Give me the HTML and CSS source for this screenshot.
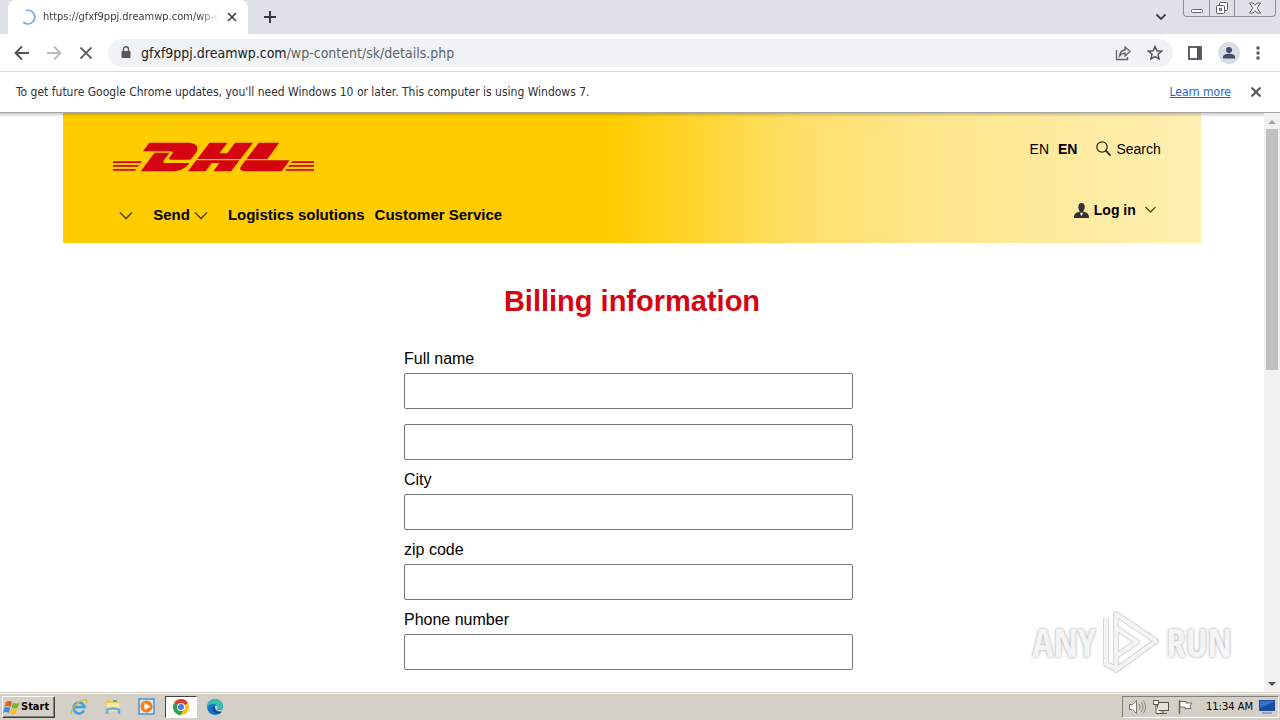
FILE: index.html
```html
<!DOCTYPE html>
<html lang="en">
<head>
<meta charset="utf-8">
<meta name="viewport" content="width=device-width, initial-scale=1">
<title>Sandbox desktop</title>
<link rel="stylesheet" href="styles.css">
</head>
<body>
<div class="desktop">
  <header class="tabstrip">
    <div class="tab">
      <svg class="spinner" width="16" height="16" viewBox="0 0 16 16"><path d="M6 1.600A6.800 6.800 0 1 1 3.200 13" fill="none" stroke="#7ba7e4" stroke-width="1.8"/></svg>
      <span class="tab-title">https://gfxf9ppj.dreamwp.com/wp-c</span>
      <button class="icon-btn" aria-label="Close tab"><svg width="10" height="10" viewBox="0 0 10 10"><path d="M1 1l8 8M9 1l-8 8" stroke="#3c4043" stroke-width="1.7"/></svg></button>
    </div>
    <button class="icon-btn new-tab" aria-label="New tab"><svg width="12" height="12" viewBox="0 0 12 12"><path d="M6 0v12M0 6h12" stroke="#35383d" stroke-width="2"/></svg></button>
    <button class="icon-btn tab-search" aria-label="Search tabs"><svg width="12" height="8" viewBox="0 0 12 8"><path d="M1.500 1.500L6 6l4.500-4.500" fill="none" stroke="#3c4043" stroke-width="1.8"/></svg></button>
    <div class="window-buttons">
      <button class="win-btn" aria-label="Minimize"><svg width="14" height="12" viewBox="0 0 14 12"><rect x="1.500" y="7.500" width="11" height="3" rx="1" fill="#fff" stroke="#5b606b"/></svg></button>
      <button class="win-btn" aria-label="Restore"><svg width="14" height="12" viewBox="0 0 14 12"><rect x="4.500" y=".5" width="8" height="8" rx="1" fill="#fff" stroke="#5b606b"/><rect x="1.500" y="3.500" width="8" height="8" rx="1" fill="#fff" stroke="#5b606b"/><rect x="4.500" y="6.500" width="2" height="2" fill="none" stroke="#5b606b"/></svg></button>
      <button class="win-btn win-close" aria-label="Close"><svg width="14" height="12" viewBox="0 0 14 12"><path d="M1.500 1h3.500l2 2.500 2-2.500h3.500L9 6l3.500 5H9L7 8.500 5 11H1.500L5 6z" fill="#fff" stroke="#5b606b"/></svg></button>
    </div>
  </header>

  <nav class="toolbar" aria-label="Browser toolbar">
    <button class="icon-btn nav-btn" aria-label="Back"><svg width="16" height="16" viewBox="0 0 16 16"><path d="M15 8H2M8 1.500L1.500 8 8 14.500" fill="none" stroke="#505459" stroke-width="1.9"/></svg></button>
    <button class="icon-btn nav-btn" aria-label="Forward"><svg width="16" height="16" viewBox="0 0 16 16"><path d="M1 8h13M8 1.500L14.500 8 8 14.500" fill="none" stroke="#b8babd" stroke-width="1.8"/></svg></button>
    <button class="icon-btn nav-btn" aria-label="Stop"><svg width="14" height="14" viewBox="0 0 14 14"><path d="M1.500 1.500l11 11M12.500 1.500l-11 11" stroke="#5f6368" stroke-width="1.8"/></svg></button>
    <div class="omnibox">
      <svg width="10" height="13" viewBox="0 0 10 13"><path d="M2.500 6V3.300a2.500 2.500 0 0 1 5 0V6" fill="none" stroke="#55585d" stroke-width="1.4"/><rect x=".5" y="5" width="9" height="7" rx="1" fill="#55585d"/></svg>
      <span class="url"><b>gfxf9ppj.dreamwp.com</b>/wp-content/sk/details.php</span>
      <button class="icon-btn" aria-label="Share"><svg width="16" height="16" viewBox="0 0 16 16"><path d="M1.500 5v9.500h11V12" fill="none" stroke="#5f6368" stroke-width="1.3"/><path d="M4.500 11C5 7 7 5.200 10 5V2l5 4.600L10 11V8.200C7.500 8.200 6 9 4.500 11z" fill="none" stroke="#5f6368" stroke-width="1.3"/></svg></button>
      <button class="icon-btn" aria-label="Bookmark"><svg width="16" height="16" viewBox="0 0 16 16"><path d="M8 1.500l1.900 4.300 4.700.4-3.600 3.100 1.100 4.600L8 11.500l-4.100 2.400L5 9.300 1.400 6.200l4.700-.4z" fill="none" stroke="#505459" stroke-width="1.500"/></svg></button>
    </div>
    <button class="icon-btn" aria-label="Side panel"><svg width="14" height="14" viewBox="0 0 14 14"><rect x="1" y="1" width="12" height="12" fill="none" stroke="#505459" stroke-width="1.800"/><path d="M9 1h4v12H9z" fill="#505459"/></svg></button>
    <button class="icon-btn" aria-label="Profile"><svg width="22" height="22" viewBox="0 0 22 22"><circle cx="11" cy="11" r="11" fill="#d9dee5"/><circle cx="11" cy="8" r="3" fill="#424c66"/><path d="M5 16.500v-1.500c0-2 3-3.200 6-3.200s6 1.200 6 3.200v1.500z" fill="#424c66"/></svg></button>
    <button class="icon-btn" aria-label="Menu"><svg width="4" height="14" viewBox="0 0 4 14"><path d="M.5.5h3v3h-3zM.5 5.500h3v3h-3zM.5 10.500h3v3h-3z" fill="#505459"/></svg></button>
  </nav>

  <div class="infobar">
    <span class="notice">To get future Google Chrome updates, you'll need Windows 10 or later. This computer is using Windows 7.</span>
    <a class="learn" href="#">Learn more</a>
    <button class="icon-btn" aria-label="Dismiss"><svg width="12" height="12" viewBox="0 0 12 12"><path d="M1.500 1.500l9 9M10.500 1.500l-9 9" stroke="#505459" stroke-width="1.9"/></svg></button>
  </div>

  <div class="viewport">
    <main class="page">
      <div class="banner">
        <div class="banner-left">
          <svg class="logo" width="201" height="30" viewBox="8 14 604 88" role="img" aria-label="DHL">
            <g fill="#d40511">
              <path d="M117 15H232C262 15 268 31 257 46L245 62Q242 66 236 66H184C176 66 174 64 178 59L186 48C189 43 188 41 181 41H98z"/>
              <path d="M91 101L133 45H178L160 69C158 73 160 76 166 76H238C226 93 208 101 182 101z"/>
              <path d="M298 15H352L328 47H351L375 15H429L391 64H261zM258 68H388L363 101H309L328 76H305L286 101H233z"/>
              <path d="M446 15H508L472 64H409zM406 68H539L515 101H407C390 101 386 94 394 84z"/>
              <path d="M8 71H95L92 76H8zM8 82H87L83 87H8zM8 94H78L74 99H8zM547 71H612V76H543zM538 82H612V87H534zM529 94H612V99H525z"/>
            </g>
          </svg>
          <nav class="menu" aria-label="Main">
            <button class="menu-btn" aria-label="More"><svg width="14" height="9" viewBox="0 0 14 9"><path d="M1 1.500l6 6 6-6" fill="none" stroke="#5d4a08" stroke-width="1.600"/></svg></button>
            <button class="menu-btn">Send <svg width="14" height="9" viewBox="0 0 14 9"><path d="M1 1.500l6 6 6-6" fill="none" stroke="#5d4a08" stroke-width="1.600"/></svg></button>
            <a href="#">Logistics solutions</a>
            <a href="#">Customer Service</a>
          </nav>
        </div>
        <div class="banner-right">
          <div class="langs">
            <a href="#">EN</a><a class="active" href="#">EN</a>
            <a class="search" href="#"><svg width="15" height="15" viewBox="0 0 15 15"><circle cx="6" cy="6" r="5.200" fill="none" stroke="#2b2410" stroke-width="1.200"/><path d="M9.700 9.700l4.800 4.800" stroke="#2b2410" stroke-width="1.700"/></svg>Search</a>
          </div>
          <button class="login"><svg width="15" height="15" viewBox="0 0 15 15"><ellipse cx="7.500" cy="4" rx="3.200" ry="4" fill="#333"/><path d="M5.500 6h4v4h-4zM0 15c0-4 1.500-5.500 5-6h5c3.500.5 5 2 5 6z" fill="#333"/><path d="M6 9.800h3L8 12.500H7z" fill="#fff"/></svg><span>Log in</span><svg class="caret" width="11" height="8" viewBox="0 0 11 8"><path d="M.5 1l5 5 5-5" fill="none" stroke="#5a4d1e" stroke-width="1.300"/></svg></button>
        </div>
      </div>

      <h1>Billing information</h1>
      <form class="form">
        <label for="f1">Full name</label>
        <input id="f1" type="text">
        <input class="second" id="f2" type="text" aria-label="Address">
        <label for="f3">City</label>
        <input id="f3" type="text">
        <label for="f4">zip code</label>
        <input id="f4" type="text">
        <label for="f5">Phone number</label>
        <input id="f5" type="text">
      </form>
    </main>
    <div class="scrollbar">
      <svg width="8" height="4" viewBox="0 0 8 4"><path d="M0 4l4-4 4 4z" fill="#a3a3a3"/></svg>
      <div class="thumb"></div>
      <svg width="8" height="4" viewBox="0 0 8 4"><path d="M0 0l4 4 4-4z" fill="#505050"/></svg>
    </div>
    <div class="watermark">
      <span>ANY</span>
      <svg width="58" height="64" viewBox="0 0 58 64"><g fill="none" stroke-linejoin="round"><path d="M14 4L54 31 14 60zM4 8v46l12 6M14 18l21 14-21 14z" stroke="#d6d6d6" stroke-width="6"/><path d="M14 4L54 31 14 60zM4 8v46l12 6M14 18l21 14-21 14z" stroke="#f4f4f4" stroke-width="4"/></g></svg>
      <span>RUN</span>
    </div>
  </div>

  <footer class="taskbar">
    <button class="start"><svg width="18" height="17" viewBox="0 0 18 17"><path d="M3 3c2-1.500 4-1.300 6 0L7.500 8c-2-1.300-4-1.300-6 0z" fill="#e8591c"/><path d="M10 3.500c2 1.200 4 1.200 6.500 0L15 8.500c-2 1.200-4 1.200-6.500 0z" fill="#78b82a"/><path d="M1.200 9c2-1.300 4-1.300 6 0l-1.500 5c-2-1.300-4-1.300-5.700 0z" fill="#3d8ddb"/><path d="M8.200 9.500c2 1.200 4 1.200 6.300 0L13 14.500c-2 1.200-4 1.200-6.300 0z" fill="#fbbf1c"/></svg>Start</button>
    <div class="apps">
      <button class="app" aria-label="Internet Explorer"><svg width="18" height="18" viewBox="0 0 18 18"><path d="M14 12.500A5.500 5.500 0 1 1 14.500 9H5" fill="none" stroke="#38a3df" stroke-width="2.600"/><path d="M2 16C-1 13 8 3 14 1.500c3-.7 3.500 1.500 2 4" fill="none" stroke="#e3b62e" stroke-width="1.300"/></svg></button>
      <button class="app" aria-label="Explorer"><svg width="18" height="18" viewBox="0 0 18 18"><path d="M2 2h5l1 2h7v9H2z" fill="#e7c765"/><path d="M3 5h12l1 8H2z" fill="#f8e7a0"/><path d="M3 16v-4c0-2 12-2 12 0v4" fill="none" stroke="#69aee0" stroke-width="2.500"/><path d="M9 2h4v2H9z" fill="#58b877"/></svg></button>
      <button class="app" aria-label="Media Player"><svg width="18" height="18" viewBox="0 0 18 18"><rect x="1" y="1" width="15" height="15" fill="#d6e9f8" stroke="#4e91c9" stroke-width="1.500"/><circle cx="8.500" cy="8.500" r="6" fill="#ef811d"/><path d="M6.500 5l6 3.500-6 3.500z" fill="#fff"/></svg></button>
      <button class="app current" aria-label="Chrome"><svg width="18" height="18" viewBox="0 0 18 18"><circle cx="9" cy="9" r="8" fill="#fbc116"/><path d="M9 9L2.100 5A8 8 0 0 1 15.900 5z" fill="#e33b2e"/><path d="M9 9L2.100 5A8 8 0 0 0 8.500 17l3.500-6z" fill="#2da14c"/><circle cx="9" cy="9" r="4" fill="#fff"/><circle cx="9" cy="9" r="3" fill="#3f7ee8"/></svg></button>
      <button class="app" aria-label="Edge"><svg width="18" height="18" viewBox="0 0 18 18"><circle cx="9" cy="9" r="8" fill="#1676c5"/><path d="M1.500 7C3 2 7 .8 10 1c5 .5 7.500 5 7 8-.5 2.500-4.500 3-6 1.500 1-2-.5-4.500-4-4.500C4.500 6 2.500 7 1.500 9z" fill="#39bfae"/><path d="M7 8c-2 4 1 8 6 7.500 1.500-.3 2.500-1 3-2-3 1-8 0-7-4z" fill="#0f4c9c"/><path d="M9 8c3-1 3 2 2 3 1 1.500 5 1 6-1l-.5 3c-4 1.500-8-1-7.500-5z" fill="#d5d0c8"/></svg></button>
    </div>
    <div class="tray">
      <svg width="18" height="16" viewBox="0 0 18 16"><path d="M1.500 5.500h3l4-4v13l-4-4h-3z" fill="#fff" stroke="#77746f"/><path d="M11 5c1.300 2 1.300 4 0 6M13 3c2.500 3 2.500 7 0 10M15 1.500c3.500 4 3.500 9 0 13" fill="none" stroke="#85827d"/></svg>
      <svg width="18" height="16" viewBox="0 0 18 16"><rect x="5.500" y="3.500" width="11" height="8" fill="#e4e1da" stroke="#57544f"/><path d="M8 14.500h7M11 12v2" stroke="#57544f"/><path d="M1.500 1.500h5v4h-5zM4 5.500v9h4" fill="#fff" stroke="#57544f"/></svg>
      <svg width="18" height="16" viewBox="0 0 18 16"><path d="M3.500 1v14" stroke="#6f6c67" stroke-width="1.500"/><path d="M4 2.500h6v1.500h6l-2 3 1 2.500H9V8H4z" fill="#fff" stroke="#6f6c67"/></svg>
      <time>11:34 AM</time>
      <svg width="16" height="14" viewBox="0 0 16 14"><rect x=".5" y=".5" width="15" height="10" fill="#2f74cf" stroke="#1d4b97"/><path d="M1 8L15 2v8H1z" fill="#174e9e"/><path d="M3 13h10" stroke="#8ba9d0" stroke-width="2"/></svg>
    </div>
  </footer>
</div>
</body>
</html>
```

FILE: styles.css
```css
* { box-sizing: border-box; }

body {
  margin: 0;
  background: #fff;
  color: #000;
  font-family: "Liberation Sans", Arial, sans-serif;
}

button {
  border: 0;
  padding: 0;
  background: none;
  color: inherit;
  font: inherit;
}

a { color: inherit; text-decoration: none; }
svg { flex: none; display: block; }

.desktop {
  display: flex;
  flex-direction: column;
  height: 100vh;
  overflow: hidden;
}

.icon-btn { display: flex; align-items: center; justify-content: center; flex: none; }

.tabstrip {
  display: flex;
  align-items: center;
  height: 34px;
  flex: none;
  padding: 0 4px 0 8px;
  background: #dee1e8;
}

.tab {
  display: flex;
  align-items: center;
  gap: 7px;
  width: 240px;
  height: 34px;
  padding: 0 11px 0 12px;
  border-radius: 8px 8px 0 0;
  background: #fff;
  font: 11px/16px "DejaVu Sans Condensed", "Noto Sans", sans-serif;
}

.tab-title {
  flex: 1;
  white-space: nowrap;
  color: #3c4043;
  mask-image: linear-gradient(to right, #000 88%, transparent);
}

.new-tab { margin-left: 16px; }
.tab-search { margin-left: auto; }

.window-buttons {
  display: flex;
  align-self: flex-start;
  height: 17px;
  margin-left: 16px;
  border: 1px solid #8b8f9a;
  border-top: 0;
  border-radius: 0 0 4px 4px;
}

.win-btn {
  display: flex;
  justify-content: center;
  align-items: center;
  width: 25px;
}
.win-btn + .win-btn { border-left: 1px solid #8b8f9a; }
.win-close { width: 41px; }

.toolbar {
  display: flex;
  align-items: center;
  height: 38px;
  flex: none;
  gap: 16px;
  padding: 0 20px 0 14px;
  border-bottom: 1px solid #dadce0;
}
.nav-btn { width: 16px; }

.omnibox {
  display: flex;
  flex: 1;
  align-items: center;
  gap: 16px;
  height: 28px;
  margin: 0 -1px 0 -2px;
  padding: 0 10px 0 13px;
  border-radius: 14px;
  background: #f0f3f5;
}

.url {
  flex: 1;
  margin-left: -6px;
  color: #5f6368;
  font: 14px/20px "DejaVu Sans Condensed", "Noto Sans", sans-serif;
}
.url b { color: #202124; font-weight: 400; }

.infobar {
  display: flex;
  align-items: center;
  flex: none;
  height: 41px;
  padding: 0 18px 0 16px;
  border-bottom: 1px solid #a5a5a5;
  font: 12px/16px "DejaVu Sans Condensed", "Noto Sans", sans-serif;
}
.notice { flex: 1; color: #303134; }
.learn { margin-right: 19px; color: #1967d2; text-decoration: underline; }

.viewport {
  position: relative;
  display: flex;
  flex: 1;
  min-height: 0;
  box-shadow: inset 0 4px 3px -2px #0003;
}

.page { flex: 1; overflow: hidden; }

.banner {
  display: flex;
  justify-content: space-between;
  height: 130px;
  margin: 0 5%;
  padding: 0 40px 0 50px;
  background: linear-gradient(to right, #fc0 48%, #ffdf66 64%, #ffe68a 75%, #fff0b2);
  font-size: 14px;
  line-height: 16px;
  box-shadow: inset 0 4px 3px -2px #0003;
}

.logo { margin-top: 29px; }

.menu {
  display: flex;
  gap: 10px;
  margin-top: 35px;
  padding-left: 6px;
  font-size: 15px;
  font-weight: 700;
}
.menu-btn { display: flex; align-items: center; gap: 4px; }
.menu-btn:first-child { margin-right: 10px; }
.menu-btn:nth-child(2) { margin-right: 10px; }

.banner-right {
  display: flex;
  flex-direction: column;
  align-items: flex-end;
  gap: 45px;
  padding-top: 28px;
}
.langs { display: flex; gap: 9px; }
.active { font-weight: 700; }
.search { display: flex; gap: 5px; margin-left: 10px; }
.login { display: flex; align-items: center; gap: 5px; margin-right: 5px; font-weight: 700; }
.caret { margin-left: 4px; }

h1 {
  margin: 40px 0 0;
  color: #d40511;
  font-size: 29px;
  line-height: 36px;
  text-align: center;
}

.form {
  display: flex;
  flex-direction: column;
  max-width: 456px;
  margin: 30px auto 0;
  padding-right: 7px;
  font-size: 16px;
  line-height: 20px;
}
.form input {
  width: 100%;
  height: 36px;
  margin: 4px 0 10px;
  border: 1px solid #767676;
  border-radius: 2px;
  padding: 0 8px;
  font: inherit;
}
.form .second { margin-top: 5px; }

.scrollbar {
  display: flex;
  flex-direction: column;
  align-items: center;
  justify-content: space-between;
  width: 16px;
  padding: 7px 0 6px;
  background: #f1f1f1;
}
.thumb { width: 12px; height: 241px; margin: 5px 0 auto; background: #c1c1c1; }

.watermark {
  position: absolute;
  right: 48px;
  bottom: 18px;
  display: flex;
  align-items: center;
  gap: 6px;
  color: #f4f4f4;
  font: 700 39px/64px "Open Sans Condensed", "Open Sans", sans-serif;
  text-shadow: 0 0 3px #999;
}

.taskbar {
  display: flex;
  align-items: center;
  height: 28px;
  flex: none;
  padding: 2px 1px 1px 2px;
  border-top: 1px solid #d4d0c8;
  background: #d4d0c8;
  box-shadow: inset 0 1px #fff;
}

.start {
  display: flex;
  align-items: center;
  gap: 0;
  width: 53px;
  height: 22px;
  border: 1px solid;
  border-color: #fff #404040 #404040 #fff;
  box-shadow: inset -1px -1px #808080;
  font: 700 11px/16px "DejaVu Sans Condensed", sans-serif;
}

.apps { display: flex; margin-left: 8px; gap: 2px; }
.app { display: flex; align-items: center; justify-content: center; width: 32px; height: 22px; }
.current { border: 1px solid; border-color: #404040 #fff #fff #404040; background: #fff; }

.tray {
  display: flex;
  align-items: center;
  gap: 6px;
  height: 22px;
  margin-left: auto;
  padding: 0 3px 0 5px;
  border: 1px solid;
  border-color: #808080 #fff #fff #808080;
  font: 11px/16px "DejaVu Sans Condensed", sans-serif;
}
.tray time { margin-left: 6px; }
```
